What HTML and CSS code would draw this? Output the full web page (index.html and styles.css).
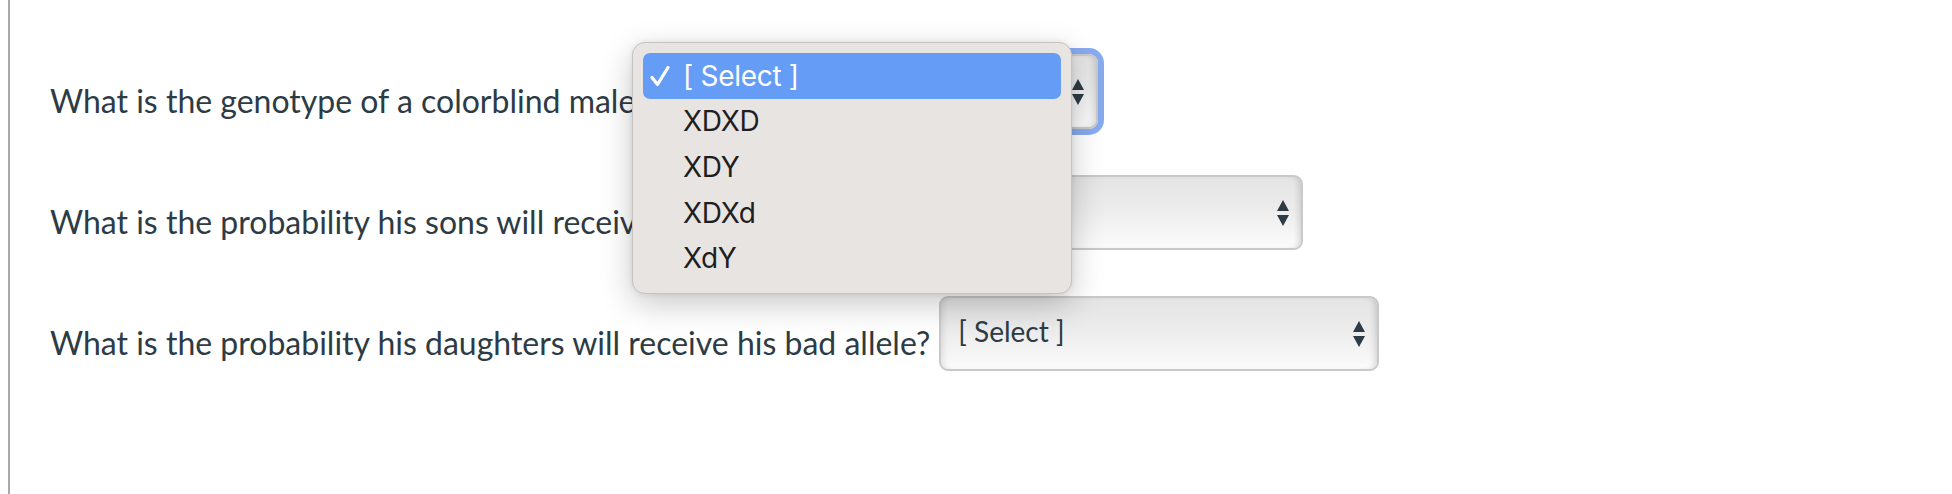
FILE: index.html
```html
<!DOCTYPE html>
<html>
<head>
<meta charset="utf-8">
<link rel="stylesheet" href="styles.css">
</head>
<body>
<div class="page">
  <div class="quiz">
    <div class="row">
      <span class="question">What is the genotype of a colorblind male?</span>
      <div class="select focused"><span class="value">[ Select ]</span><span class="arrows"><i class="up"></i><i class="down"></i></span></div>
    </div>
    <div class="row">
      <span class="question">What is the probability his sons will receive his bad allele?</span>
      <div class="select"><span class="value">[ Select ]</span><span class="arrows"><i class="up"></i><i class="down"></i></span></div>
    </div>
    <div class="row">
      <span class="question">What is the probability his daughters will receive his bad allele?</span>
      <div class="select"><span class="value">[ Select ]</span><span class="arrows"><i class="up"></i><i class="down"></i></span></div>
    </div>
  </div>
  <ul class="menu">
    <li class="item selected"><span class="check"><svg width="20" height="22" viewBox="0 0 20 22"><path d="M2 12.5 L7.5 19.5 L18 2.5" fill="none" stroke="#ffffff" stroke-width="3.2" stroke-linecap="round" stroke-linejoin="round"/></svg></span>[ Select ]</li>
    <li class="item"><span class="check"></span>XDXD</li>
    <li class="item"><span class="check"></span>XDY</li>
    <li class="item"><span class="check"></span>XDXd</li>
    <li class="item"><span class="check"></span>XdY</li>
  </ul>
</div>
</body>
</html>
```
FILE: styles.css
```css
html, body {
  margin: 0;
  padding: 0;
  background: #ffffff;
}
body {
  width: 1952px;
  height: 494px;
  overflow: hidden;
}
.page {
  position: relative;
  margin-left: 8px;
  height: 494px;
  border-left: 2px solid #a9a9a9;
  font-family: Lato, "Open Sans", sans-serif;
  color: #2d3b45;
}
.quiz {
  padding: 54px 0 0 40px;
  display: flex;
  flex-direction: column;
  gap: 46px;
}
.row {
  display: flex;
  align-items: center;
  gap: 9px;
  height: 75px;
}
.question {
  font-size: 32px;
  line-height: 38px;
  padding-top: 18px;
  white-space: nowrap;
}
.select {
  position: relative;
  box-sizing: border-box;
  width: 440px;
  height: 75px;
  border: 2px solid #c9c9c9;
  border-radius: 9px;
  background: linear-gradient(#e4e4e4 0%, #ececec 45%, #fbfbfb 100%);
  box-shadow: inset 6px 0 6px -4px rgba(0,0,0,0.10), inset -6px 0 6px -4px rgba(0,0,0,0.14);
  display: flex;
  align-items: center;
  justify-content: space-between;
  padding: 0 12px 0 17px;
}
.select.focused {
  box-shadow: 0 0 0 6px #88abf0, inset 6px 0 6px -4px rgba(0,0,0,0.10), inset -6px 0 6px -4px rgba(0,0,0,0.14);
}
.value {
  font-size: 28px;
  color: #2d3b45;
  padding-bottom: 6px;
}
.arrows {
  display: flex;
  flex-direction: column;
  gap: 4px;
  align-items: center;
}
.arrows i {
  display: block;
  width: 0;
  height: 0;
  border-left: 6px solid transparent;
  border-right: 6px solid transparent;
}
.arrows .up { border-bottom: 11px solid #2d3b45; }
.arrows .down { border-top: 11px solid #2d3b45; }
.menu {
  position: absolute;
  left: 622px;
  top: 42px;
  width: 440px;
  box-sizing: border-box;
  margin: 0;
  list-style: none;
  padding: 10px 10px 12px 10px;
  background: #e8e4e2;
  border: 1px solid #c6c3c1;
  border-radius: 13px;
  box-shadow: 0 10px 32px rgba(0,0,0,0.22), 0 0 6px rgba(0,0,0,0.08);
  font-family: Inter, "Liberation Sans", sans-serif;
  font-size: 28px;
  color: #1e1e1e;
}
.item {
  display: flex;
  align-items: center;
  height: 45.6px;
  padding-left: 7px;
  border-radius: 7px;
  letter-spacing: -0.3px;
}
.item.selected {
  background: #659cf6;
  color: #ffffff;
}
.check {
  display: inline-flex;
  align-items: center;
  width: 33px;
}
```
